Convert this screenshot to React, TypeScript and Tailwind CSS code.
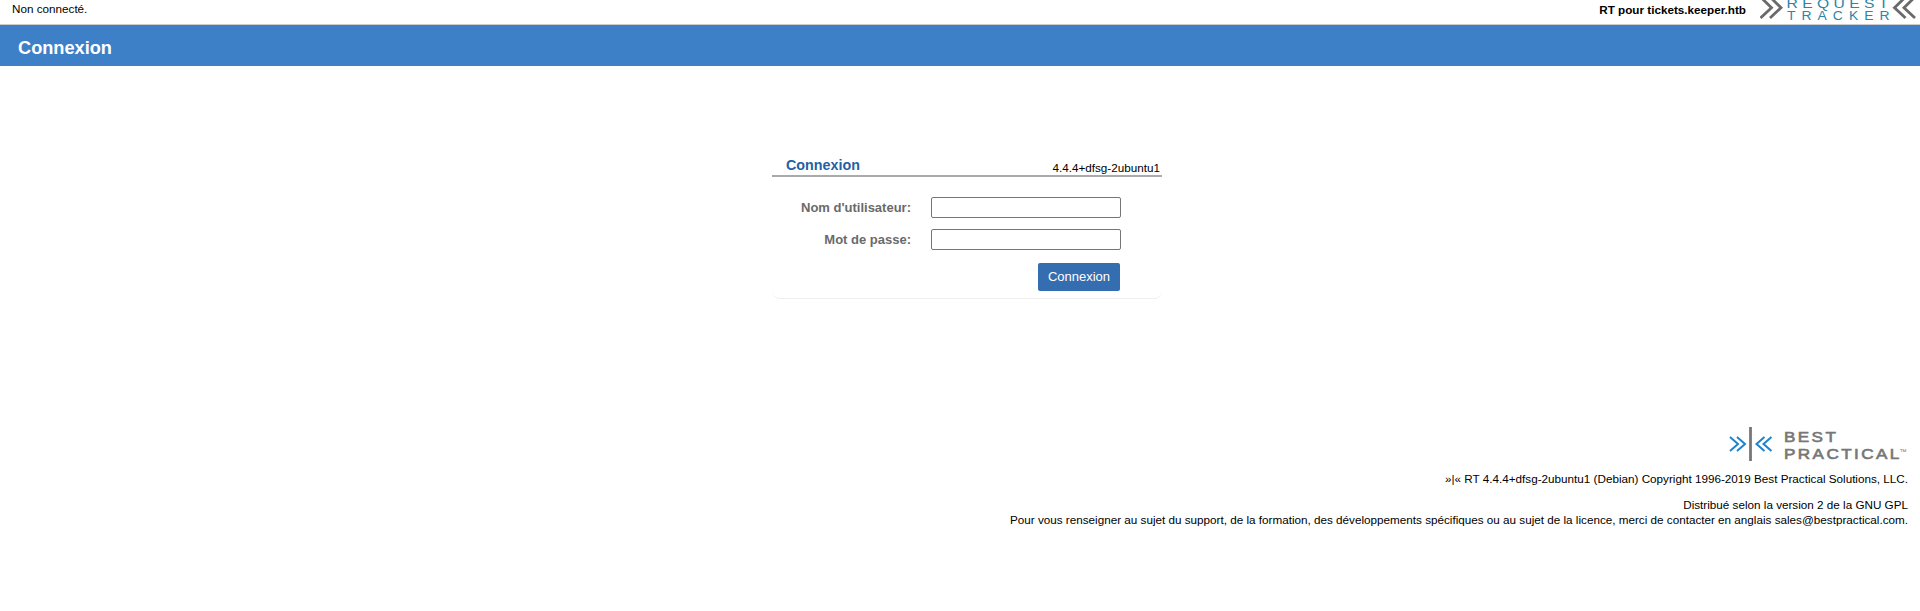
function RequestTracker() {
  return (
    <svg className="block" width="160" height="24" viewBox="0 0 160 24" role="img" aria-label="Request Tracker">
      <g fill="none" stroke="#6a6a6a" strokeWidth="2.8">
        <path d="M0.5-3 11.5 7.7 0.5 18M10-3 21 7.7 10 18" />
        <path d="M145.5-3 134.5 7.7 145.5 18M155-3 144 7.7 155 18" />
      </g>
      <g fill="#2c84a8" fontFamily="Liberation Sans, sans-serif">
        <text transform="translate(26.5 8) scale(1.15 1)" fontSize="13.6" textLength="88.5" lengthAdjust="spacing">REQUEST</text>
        <text transform="translate(27 20) scale(1.12 1)" fontSize="12.4" textLength="91.5" lengthAdjust="spacing">TRACKER</text>
      </g>
    </svg>
  );
}

function BestPractical() {
  return (
    <svg className="block" width="180" height="36" viewBox="0 0 180 36" role="img" aria-label="Best Practical">
      <g fill="none" stroke="#1c83ce" strokeWidth="2">
        <path d="M2 11 10 18 2 25M9 11 17 18 9 25" />
        <path d="M36.5 11 28.5 18 36.5 25M43.5 11 35.5 18 43.5 25" />
      </g>
      <path d="M22.5 1V35" stroke="#777" strokeWidth="2.8" />
      <g fill="#777" stroke="#777" strokeWidth="0.6" fontFamily="Liberation Sans, sans-serif">
        <text transform="translate(56 16) scale(1.22 1)" fontSize="14" textLength="42.5" lengthAdjust="spacing">BEST</text>
        <text transform="translate(56 33) scale(1.22 1)" fontSize="14" textLength="94.5" lengthAdjust="spacing">PRACTICAL</text>
        <text x="171.5" y="27.5" fontSize="7" strokeWidth="0">™</text>
      </g>
    </svg>
  );
}

export default function App() {
  return (
    <div className="h-[611px] overflow-hidden bg-white font-['Liberation_Sans',Arial,sans-serif] text-[11.7px] text-black">
      <header className="flex h-[25px] items-start justify-between overflow-hidden border-b border-[#ccc] pl-3">
        <span className="mt-[2px] leading-[13px]">Non connecté.</span>
        <div className="flex">
          <span className="mt-[3px] mr-[14px] leading-[13px] font-bold">RT pour tickets.keeper.htb</span>
          <RequestTracker />
        </div>
      </header>
      <h1 className="h-[41px] bg-[#3d80c8] pl-[18px] text-[18.2px] leading-[46px] font-bold text-white">Connexion</h1>

      <main className="mt-[87px] ml-[772px] h-[146px] w-[390px] rounded-b-[8px] border-b border-[#eee]">
        <div className="flex h-6 justify-between border-b-2 border-[#aaa] pr-[2px] pl-[14px]">
          <h2 className="text-[14.3px] leading-[24px] font-bold text-[#2460a4]">Connexion</h2>
          <span className="mt-[8px] leading-[13px]">4.4.4+dfsg-2ubuntu1</span>
        </div>
        <form className="pt-5" onSubmit={(e) => e.preventDefault()}>
          <label className="mb-[11px] flex h-[21px] items-center">
            <span className="mr-5 w-[139px] text-right text-[13px] font-bold text-[#6a6a6a]">Nom d'utilisateur:</span>
            <input className="h-[21px] w-[190px] rounded-[2px] border border-[#767676] bg-white px-1" />
          </label>
          <label className="flex h-[21px] items-center">
            <span className="mr-5 w-[139px] text-right text-[13px] font-bold text-[#6a6a6a]">Mot de passe:</span>
            <input type="password" className="h-[21px] w-[190px] rounded-[2px] border border-[#767676] bg-white px-1" />
          </label>
          <button className="mt-[13px] ml-[266px] block h-7 w-[82px] rounded-[2px] bg-[#346db0] text-[13px] text-white">Connexion</button>
        </form>
      </main>

      <footer className="mt-[127px] flex flex-col items-end pr-3 text-right leading-[15px]">
        <BestPractical />
        <p className="mt-[9px]">»|« RT 4.4.4+dfsg-2ubuntu1 (Debian) Copyright 1996-2019 Best Practical Solutions, LLC.</p>
        <p className="mt-[11px]">Distribué selon la version 2 de la GNU GPL<br />Pour vous renseigner au sujet du support, de la formation, des développements spécifiques ou au sujet de la licence, merci de contacter en anglais sales@bestpractical.com.</p>
      </footer>
    </div>
  );
}
